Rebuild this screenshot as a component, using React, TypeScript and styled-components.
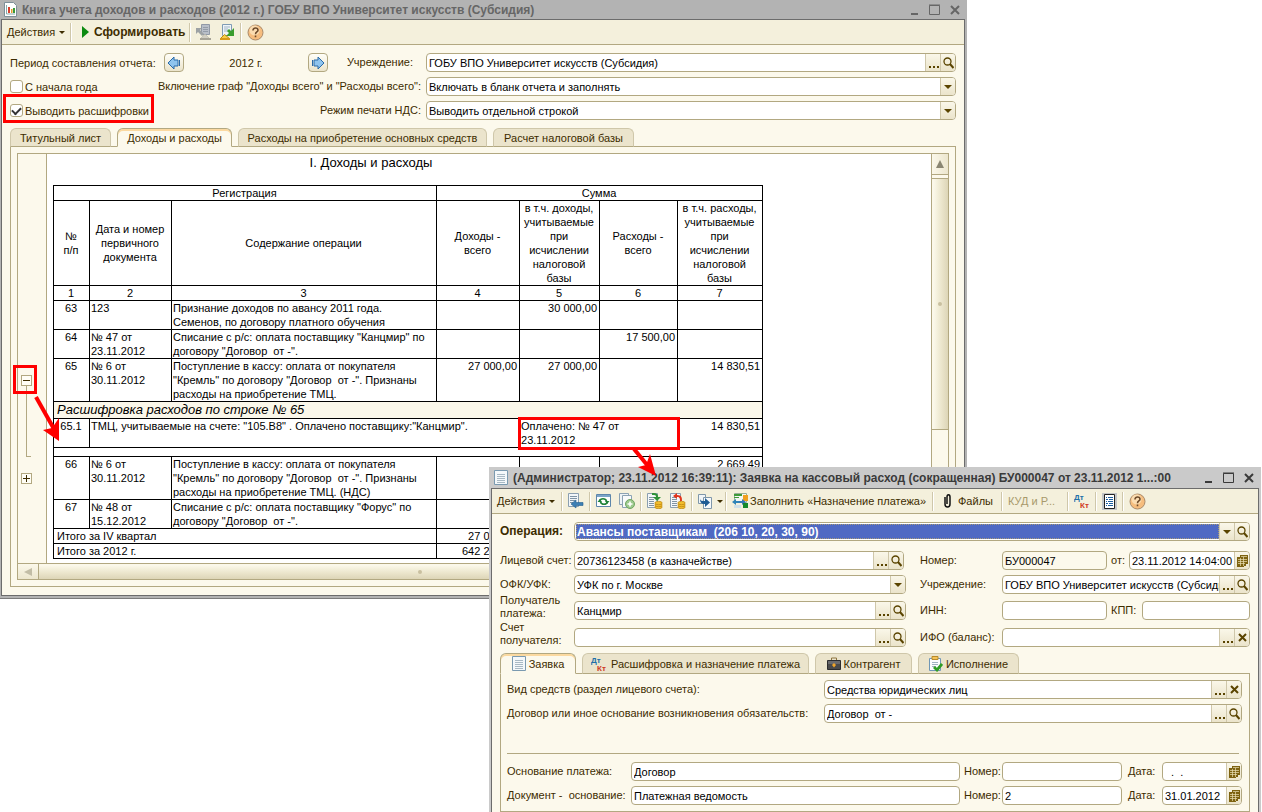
import React from 'react';
import styled, { createGlobalStyle, css } from 'styled-components';

const c = {
  cream: '#fcf9ec',
  bar: '#f4f0dc',
  line: '#b2a881',
  soft: '#cfc7aa',
  tab: '#ebe4cc',
  text: '#3d2c00',
  mark: '#5a4400',
  red: '#ff0000',
};

const Global = createGlobalStyle`
  * { box-sizing: border-box; }
  html, body { margin: 0; background: #fff; }
  body, input, select, button, table {
    font-family: "Liberation Sans", Arial, sans-serif;
    font-size: 11px;
    line-height: 14px;
  }
  svg { flex: none; }
`;

const Desktop = styled.main`
  position: relative;
  min-height: 100vh;
  overflow: hidden;
  background: #fff;
  color: ${c.text};
`;

/* ---------- window frame ---------- */

const ReportWindow = styled.section`
  width: calc(100% - 295px);
  padding: 0 2px 2px 1px;
  border-bottom: 1px solid #7c7c7c;
  background: #b3b3b3;
`;

const RequestWindow = styled.section`
  position: absolute;
  top: 467px;
  left: 489px;
  right: 1px;
  bottom: 0;
  display: flex;
  flex-direction: column;
  padding: 0 2px;
  background: #cacaca;
`;

const TitleBar = styled.header<{ $active?: boolean }>`
  display: flex;
  align-items: center;
  gap: 5px;
  height: ${(p) => (p.$active ? 21 : 19)}px;
  padding: 0 4px 0 3px;
  color: ${(p) => (p.$active ? '#3a3a3a' : '#666')};
`;

const Title = styled.h1`
  flex: 1;
  min-width: 0;
  margin: 0;
  overflow: hidden;
  white-space: nowrap;
  font-size: 12px;
  line-height: 16px;
  font-weight: bold;
`;

const WindowButtons = styled.div`
  display: flex;
  gap: 7px;
`;

const WindowButton = styled.button`
  display: flex;
  width: 13px;
  height: 13px;
  padding: 0;
  border: 0;
  background: none;
  color: inherit;
`;

const Client = styled.div`
  flex: 1;
  border: 1px solid #6c6c6c;
  background: ${c.cream};
`;

const Toolbar = styled.div`
  display: flex;
  align-items: center;
  height: 25px;
  padding: 0 5px;
  border-bottom: 1px solid ${c.line};
  background: ${c.bar};
`;

const Separator = styled.i<{ $before?: number; $after?: number }>`
  flex: none;
  width: 2px;
  height: 19px;
  margin: 0 ${(p) => p.$after ?? 5}px 0 ${(p) => p.$before ?? 5}px;
  border-left: 1px solid ${c.soft};
  border-right: 1px solid #fff;
`;

const ToolButton = styled.button<{ $strong?: boolean; $width?: number; $gap?: number }>`
  display: flex;
  flex: none;
  align-items: center;
  gap: ${(p) => p.$gap ?? 4}px;
  width: ${(p) => (p.$width ? `${p.$width}px` : 'auto')};
  padding: 0;
  border: 0;
  background: none;
  color: ${c.text};
  font-weight: ${(p) => (p.$strong ? 'bold' : 'normal')};
  font-size: ${(p) => (p.$strong ? 12 : 11)}px;
  white-space: nowrap;
  &:disabled { color: #a8996b; }
`;

const CaretMark = styled.i`
  width: 0;
  height: 0;
  border: 3px solid transparent;
  border-top-color: ${c.text};
  border-bottom-width: 0;
`;

/* ---------- fields ---------- */

const FieldBox = styled.div<{ $dim?: boolean; $picked?: boolean; $width?: number }>`
  display: flex;
  flex: ${(p) => (p.$width ? 'none' : '1')};
  width: ${(p) => (p.$width ? `${p.$width}px` : 'auto')};
  min-width: 0;
  height: 19px;
  border: 1px solid ${c.line};
  border-radius: 4px;
  background: ${(p) => (p.$dim ? c.cream : '#fff')};
  overflow: hidden;
  ${(p) =>
    p.$picked &&
    css`
      select {
        margin: 1px 0 1px 1px;
        padding-left: 1px;
        background: #4f69c3;
        outline: 1px dotted #a89a78;
        outline-offset: -1px;
        color: #fff;
        font-weight: bold;
        font-size: 12px;
      }
    `}
`;

const control = css`
  flex: 1;
  width: 0;
  min-width: 0;
  height: auto;
  padding: 0 0 0 2px;
  border: 0;
  border-radius: 0;
  outline: 0;
  background: transparent;
  color: #000;
  appearance: none;
`;
const TextInput = styled.input`${control}`;
const Select = styled.select`${control}`;

const FieldButton = styled.button`
  display: flex;
  flex: none;
  align-items: center;
  justify-content: center;
  width: 15px;
  padding: 0;
  border: 0;
  border-left: 1px solid ${c.soft};
  background: linear-gradient(#faf7e9, #ebe4cb);
  color: ${c.mark};
`;

const DropMark = styled(FieldButton).attrs({ as: 'span' })`
  pointer-events: none;
`;

const SquareButton = styled.button`
  display: flex;
  align-items: center;
  justify-content: center;
  flex: none;
  width: 20px;
  height: 19px;
  padding: 0;
  border: 1px solid ${c.line};
  border-radius: 4px;
  background: linear-gradient(#fffef8, #ebe4cb);
`;

type Mark = 'dots' | 'lens' | 'drop' | 'clear' | 'calendar';

const marks: Record<Mark, React.ReactNode> = {
  dots: (
    <svg width="11" height="11" fill={c.mark}><path d="M1 9h2v2H1zM5 9h2v2H5zM9 9h2v2H9z" /></svg>
  ),
  lens: (
    <svg width="11" height="12" fill="none" stroke={c.mark}>
      <circle cx="4.5" cy="4.5" r="3.5" strokeWidth="1.3" />
      <path d="M7 7l3.5 4" strokeWidth="2" />
    </svg>
  ),
  drop: <svg width="8" height="4" fill={c.mark}><path d="M0 0h8L4 4z" /></svg>,
  clear: (
    <svg width="9" height="9" stroke={c.mark} strokeWidth="2"><path d="M1 1l7 7M8 1L1 8" /></svg>
  ),
  calendar: (
    <svg width="11" height="12">
      <path d="M3 0h8v9H9v2H7v1H0V2h3z" fill="#7d6210" />
      <path d="M1 4.500h9M1 6.500h9M1 8.500h7M3.500 3v8M6.500 2v9M4 1.500h6" stroke="#e9dfb4" strokeWidth=".7" />
    </svg>
  ),
};

const markNames: Record<Mark, string> = {
  dots: 'Выбрать',
  lens: 'Открыть',
  drop: 'Список',
  clear: 'Очистить',
  calendar: 'Календарь',
};

interface FieldProps {
  id: string;
  value?: string;
  marks?: Mark[];
  list?: boolean;
  dim?: boolean;
  picked?: boolean;
  width?: number;
}

function Field({ id, value = '', marks: buttons = [], list, dim, picked, width }: FieldProps) {
  return (
    <FieldBox $dim={dim} $picked={picked} $width={width}>
      {list ? (
        <Select id={id}><option>{value}</option></Select>
      ) : (
        <TextInput id={id} defaultValue={value} readOnly={dim} />
      )}
      {buttons.map((m) =>
        m === 'drop' ? (
          <DropMark key={m}>{marks.drop}</DropMark>
        ) : (
          <FieldButton key={m} type="button" aria-label={markNames[m]}>{marks[m]}</FieldButton>
        ),
      )}
    </FieldBox>
  );
}

const Label = styled.label<{ $width?: number }>`
  flex: none;
  width: ${(p) => (p.$width ? `${p.$width}px` : 'auto')};
  line-height: 13px;
  white-space: pre;
`;

const StrongLabel = styled(Label)`
  font-size: 12px;
  font-weight: bold;
`;

/* ---------- report form ---------- */

const ReportForm = styled.form`
  display: flex;
  flex-direction: column;
  gap: 5px;
  padding: 8px 8px;
`;

const ReportRow = styled.div`
  display: grid;
  grid-template-columns: 411px 1fr;
  column-gap: 5px;
  align-items: center;
`;

const Lead = styled.div`
  display: flex;
  align-items: center;
  justify-content: space-between;
`;

const PeriodLead = styled(Lead)`
  padding-right: 8px;
`;

const PeriodName = styled.span`
  width: 154px;
`;

const Period = styled.div`
  display: flex;
  align-items: center;
  justify-content: space-between;
  width: 164px;
  margin-right: auto;
`;

const Tick = styled.label<{ $called?: boolean }>`
  position: relative;
  display: flex;
  align-items: center;
  gap: 2px;
  white-space: nowrap;
  ${(p) =>
    p.$called &&
    css`
      &::after {
        content: '';
        position: absolute;
        inset: -10px -5px -5px -7px;
        border: 3px solid ${c.red};
        pointer-events: none;
      }
    `}
`;

const TickBox = styled.input`
  display: grid;
  place-items: center;
  width: 13px;
  height: 13px;
  margin: 0;
  border: 1px solid ${c.line};
  border-radius: 3px;
  background: #fff;
  appearance: none;
  &:checked::after {
    content: '';
    width: 7px;
    height: 4px;
    margin-bottom: 2px;
    border: solid #333;
    border-width: 0 0 2px 2px;
    transform: rotate(-45deg);
  }
`;

/* ---------- tabs ---------- */

const Tabs = styled.div`
  position: relative;
  display: flex;
  gap: 6px;
  margin: 0 8px -1px;
`;

const Tab = styled.button<{ $on?: boolean; $tall?: boolean; $width: number }>`
  display: flex;
  align-items: center;
  justify-content: center;
  gap: 3px;
  width: ${(p) => p.$width}px;
  height: ${(p) => (p.$tall ? 21 : 19)}px;
  padding: 0;
  border: 1px solid ${(p) => (p.$on ? c.line : c.soft)};
  border-bottom-color: ${(p) => (p.$on ? c.cream : c.line)};
  border-radius: 6px 6px 0 0;
  background: ${(p) => (p.$on ? c.cream : c.tab)};
  box-shadow: ${(p) => (p.$on ? 'inset 0 2px #fbd9a0' : 'none')};
  color: ${c.text};
  white-space: nowrap;
`;

/* ---------- spreadsheet ---------- */

const TabPanel = styled.div`
  margin: 0 8px 8px;
  padding: 6px;
  border: 1px solid ${c.line};
`;

const SheetFrame = styled.div`
  display: grid;
  grid-template-columns: 29px 1fr 17px;
  grid-template-rows: 409px 16px;
  border: 1px solid ${c.line};
`;

const Gutter = styled.div`
  display: flex;
  flex-direction: column;
  align-items: flex-start;
  padding: 221px 0 0 3px;
  border-right: 1px solid ${c.line};
`;

const TreeButton = styled.button<{ $called?: boolean }>`
  position: relative;
  display: flex;
  flex: none;
  width: 11px;
  height: 11px;
  padding: 0;
  border: 1px solid ${c.line};
  background: #fffef6;
  ${(p) =>
    p.$called &&
    css`
      &::after {
        content: '';
        position: absolute;
        inset: -11px -6px -9px -9px;
        border: 3px solid ${c.red};
      }
    `}
`;

const Stem = styled.i`
  flex: none;
  width: 5px;
  height: 71px;
  margin: 0 0 16px 5px;
  border: solid ${c.line};
  border-width: 0 0 1px 1px;
`;

const Sheet = styled.div`
  min-width: 0;
  overflow: hidden;
  padding: 0 0 0 6px;
  background: #fff;
  color: #000;
`;

const SheetTitle = styled.h2`
  width: 636px;
  margin: 0 0 14px;
  padding-top: 1px;
  font-size: 13px;
  line-height: 16px;
  font-weight: normal;
  text-align: center;
`;

const Grid = styled.table`
  width: 710px;
  border-collapse: collapse;
  table-layout: fixed;
  th, td {
    height: 15px;
    padding: 0 2px 0 1px;
    border: 1px solid #000;
    font-weight: normal;
    text-align: left;
    vertical-align: top;
    white-space: pre-wrap;
  }
  thead th { text-align: center; vertical-align: middle; padding: 0 1px 0 0; }
`;

const Num = styled.td`
  && { text-align: right; }
`;
const Mid = styled.td`
  && { text-align: center; }
`;
const Wide = styled.td`
  && { padding-left: 3px; }
`;
const Group = styled.td`
  && {
    height: 17px;
    padding-left: 3px;
    background: #faf7ea;
    font-size: 13px;
    line-height: 16px;
    font-style: italic;
  }
`;
const Blank = styled.td`
  && { height: 9px; line-height: 8px; }
`;
const Called = styled.td`
  position: relative;
  &::after {
    content: '';
    position: absolute;
    inset: -2px -3px -3px -2px;
    border: 3px solid ${c.red};
  }
`;
const NoRight = styled.td`
  && { border-right: 0; }
`;

const ScrollV = styled.div`
  display: flex;
  flex-direction: column;
  gap: 3px;
  border-left: 1px solid ${c.line};
`;

const ScrollH = styled.div`
  grid-column: 1 / -1;
  display: flex;
  border-top: 1px solid ${c.line};
`;

const ArrowBox = styled.button<{ $side?: boolean }>`
  display: flex;
  flex: none;
  align-items: center;
  justify-content: center;
  width: ${(p) => (p.$side ? 21 : 16)}px;
  height: ${(p) => (p.$side ? 15 : 21)}px;
  padding: 0;
  border: solid ${c.line};
  border-width: ${(p) => (p.$side ? '0 1px 0 0' : '0 0 1px 0')};
  background: linear-gradient(${(p) => (p.$side ? '180deg' : '90deg')}, #fbf8ea, #ece6ce);
`;

const Thumb = styled.div<{ $side?: boolean }>`
  display: flex;
  align-items: center;
  justify-content: center;
  width: ${(p) => (p.$side ? '763px' : '16px')};
  height: ${(p) => (p.$side ? '15px' : '252px')};
  border: solid ${c.line};
  border-width: ${(p) => (p.$side ? '0 1px 0 0' : '1px 0')};
  background: linear-gradient(
    ${(p) => (p.$side ? '180deg' : '90deg')},
    #fbf8ea 0 10%, #f3efda 35%, #ebe5cc 60%, #e2dbbf 85%, #ddd5b6
  );
  &::after {
    content: '';
    width: 4px;
    height: 4px;
    border-radius: 2px;
    background: #c9c0a0;
  }
`;

/* ---------- request form ---------- */

const RequestForm = styled.form`
  display: flex;
  flex-direction: column;
  padding: 8px 8px 6px;
`;

const Line = styled.div<{ $gap?: number; $tall?: boolean }>`
  display: flex;
  align-items: ${(p) => (p.$tall ? 'flex-end' : 'center')};
  height: ${(p) => (p.$tall ? 26 : 19)}px;
  margin-top: ${(p) => p.$gap ?? 0}px;
`;

const Half = styled.div<{ $short?: boolean; $tall?: boolean }>`
  display: flex;
  flex: 1;
  align-items: ${(p) => (p.$tall ? 'flex-end' : 'center')};
  min-width: 0;
  padding-right: ${(p) => (p.$short ? 2 : 0)}px;
`;

const Side = styled.div`
  display: flex;
  flex: none;
  align-items: center;
  gap: 4px;
  width: 330px;
  margin-left: 14px;
`;

const RequestPanel = styled.div`
  flex: 1;
  margin: 0 8px;
  padding: 6px 7px 0 6px;
  border: 1px solid ${c.line};
`;

const RequestClient = styled(Client)`
  display: flex;
  flex-direction: column;
  min-height: 0;
  border-bottom: 0;
`;

const PanelRow = styled.div`
  display: flex;
  align-items: center;
  height: 19px;
  margin-bottom: 5px;
`;

const Rule = styled.hr`
  height: 1px;
  margin: 30px 3px 8px 0;
  border: 0;
  background: ${c.line};
`;

const NumberLabel = styled(Label)`
  width: 38px;
  margin-left: 4px;
`;

const DateGroup = styled.div`
  display: flex;
  align-items: center;
  justify-content: space-between;
  width: 114px;
  margin-left: 6px;
`;

/* ---------- callout arrows ---------- */

const Arrow = styled.svg<{ $x: number; $y: number }>`
  position: absolute;
  left: ${(p) => p.$x}px;
  top: ${(p) => p.$y}px;
  pointer-events: none;
`;

/* ---------- icons ---------- */

const HelpIcon = () => (
  <svg width="17" height="17">
    <circle cx="8.500" cy="8.500" r="7.500" fill="#f6bd7e" stroke="#a98a6a" />
    <circle cx="7.500" cy="6.500" r="5" fill="#fbdcb0" />
    <path d="M6 6.500c0-3.500 5-3 5-.300 0 1.800-2.500 1.800-2.500 4M8.500 11.500v1.800" fill="none" stroke="#6d4a2a" strokeWidth="1.600" />
  </svg>
);

const ReportIcon = () => (
  <svg width="13" height="15">
    <path d="M.5.5h9l3 3v11H.5z" fill="#fff" stroke="#7e8f98" />
    <path d="M2.500 3v9H11" fill="none" stroke="#8aa" />
    <path d="M4 5h2v6H4z" fill="#d8402e" />
    <path d="M7 7h1.500v4H7z" fill="#e89a2e" />
    <path d="M9 6h2v5H9z" fill="#3a9a38" />
  </svg>
);

const PageIcon = () => (
  <svg width="14" height="15">
    <path d="M.5.5h13v14H.5z" fill="#f4f8fa" stroke="#7a9ab0" />
    <path d="M3 4.500h8M3 6.500h8M3 8.500h8M3 10.500h8M3 12.500h8" stroke="#a8b9c4" />
  </svg>
);

const PlayIcon = () => (
  <svg width="7" height="12"><path d="M0 0l7 6-7 6z" fill="#0c8a10" /></svg>
);

const SaveOffIcon = () => (
  <svg width="17" height="17">
    <path d="M5.500.5h8v10h-8z" fill="#b9bfc9" stroke="#9199a6" />
    <path d="M7 3.500h5M7 5.500h5M7 7.500h5" stroke="#949ca8" />
    <path d="M0 4h6L4 6l4 4-2 2-4-4-2 2z" fill="#9da2a4" />
    <path d="M4 15l5-5 5 5z" fill="#d2cfc4" stroke="#b5b2a6" strokeWidth=".6" />
    <path d="M4 14h11v2H4z" fill="#a7a497" />
  </svg>
);

const SaveOnIcon = () => (
  <svg width="17" height="17">
    <path d="M3.500.5h9v11h-9z" fill="#eff4f8" stroke="#7f9bb4" />
    <path d="M5 3h6M5 5h4M5 7h4" stroke="#9fb3c6" />
    <path d="M15 4v8H7l3-3-2-2 2-2 2 2z" fill="#3a9d2e" />
    <path d="M1 15l4.500-4.500L11 15z" fill="#f6cf4a" stroke="#c08a10" />
    <path d="M1 14h10v2H1z" fill="#d79a1a" />
  </svg>
);

const ArrowIcon = ({ back }: { back?: boolean }) => (
  <svg width="14" height="14">
    <path
      d={back ? 'M1 7l6-6v3h4v6H7v3z' : 'M13 7L7 1v3H3v6h4v3z'}
      fill="#8fc4ee"
      stroke="#2a6aa8"
      strokeLinejoin="round"
    />
    <path d={back ? 'M12.500 4v6' : 'M1.500 4v6'} stroke="#2a6aa8" />
  </svg>
);

const PostIcon = () => (
  <svg width="17" height="16">
    <path d="M1.500.5h10v13h-10z" fill="#f2f6f9" stroke="#8b9fb0" />
    <path d="M3 3.500h7M3 5.500h7M3 7.500h5M3 9.500h3" stroke="#7f94a6" />
    <path d="M4 11l5-4v2.500h7v3H9V15z" fill="#3d7fb4" stroke="#23608f" strokeWidth=".6" />
  </svg>
);

const RefreshIcon = () => (
  <svg width="15" height="14">
    <path d="M.5.5h14v12H.5z" fill="#fdfefe" stroke="#5d86ab" />
    <path d="M1 1h13v2H1z" fill="#7ba4c8" />
    <path d="M3.500 7c1-3 6-3 7 0M11.500 8c-1 3-6 3-7 0" fill="none" stroke="#1e8238" strokeWidth="1.700" />
    <path d="M9 7h4.500L11 10zM1.500 8H6L4 5z" fill="#1e8238" />
  </svg>
);

const CopyIcon = () => (
  <svg width="16" height="16">
    <path d="M.5.5h9v11h-9z" fill="#eef3f6" stroke="#8ba2b4" />
    <path d="M3.500 2.500h9v12h-9z" fill="#f8fafb" stroke="#8ba2b4" />
    <circle cx="11" cy="11" r="4.500" fill="#9cc98c" stroke="#6fa562" />
    <path d="M11 8.500v5M8.500 11h5" stroke="#fff" strokeWidth="1.600" />
  </svg>
);

const Coins = () => (
  <g fill="#f2bd2c" stroke="#b98310" strokeWidth=".7">
    <ellipse cx="11.500" cy="14" rx="3.700" ry="1.700" />
    <ellipse cx="11.500" cy="12" rx="3.700" ry="1.700" />
    <ellipse cx="11.500" cy="10" rx="3.700" ry="1.700" />
  </g>
);

const LedgerIcon = ({ undo }: { undo?: boolean }) => (
  <svg width="16" height="16">
    <path d="M.5.5h10v14H.5z" fill="#f4f7f9" stroke="#8b9fb0" />
    <path d="M2 4.500h5M2 6.500h5M2 8.500h5M2 10.500h5M2 12.500h5" stroke="#8194a4" />
    {undo ? (
      <path d="M3 3l4-3v2c5 0 5 3 5 6h-2c0-2 0-4-3-4v2z" fill="#e2341c" />
    ) : (
      <path d="M5 0c6 0 6 2 6 4h3l-4 4-4-4h3c0-2-1-2-4-2z" fill="#2f9338" />
    )}
    <Coins />
  </svg>
);

const BasedOnIcon = () => (
  <svg width="15" height="15">
    <path d="M.5.5h7v9h-7z" fill="#f1f5f8" stroke="#7f97aa" />
    <path d="M5.500 3.500h8v11h-8z" fill="#f6f9fb" stroke="#7f97aa" />
    <path d="M2 4c0 3 2 3 5 3V4l5 4.500L7 13v-3C3 10 2 8 2 4z" fill="#1f5c94" />
  </svg>
);

const FillIcon = () => (
  <svg width="17" height="16">
    <path d="M2.500.5h12v9h-12z" fill="#f3f7f2" stroke="#9ab09a" />
    <path d="M2 1h8v2H2zM2 4h5v1H2z" fill="#3f9a3a" />
    <path d="M11 2h5v6h-5z" fill="#f0a020" />
    <path d="M0 9l4-3v2h3v2H4v2z" fill="#2f84b8" />
    <path d="M14 9l-4-3v2H7v2h3v2z" fill="#3878b8" />
    <path d="M11 10h5v5h-5z" fill="#178a2c" />
    <path d="M2 12h7v3H2z" fill="#cfe0e8" />
  </svg>
);

const ClipIcon = () => (
  <svg width="7" height="14" fill="none" stroke="#111" strokeWidth="1.500">
    <path d="M1 3v7c0 4 5 4 5 0V3c0-3-3-3-3 0v7" />
  </svg>
);

const DtKtIcon = () => (
  <svg width="17" height="16" fontFamily="Liberation Sans, sans-serif" fontWeight="bold" fontSize="8">
    <text x="0" y="7" fill="#1f6fa8">Дт</text>
    <text x="6" y="15" fill="#cf3a20">Кт</text>
  </svg>
);

const JournalIcon = () => (
  <svg width="15" height="17">
    <path d="M0 0h15v17H0z" fill="#c3c6c8" />
    <path d="M2.500 1.500h10v14h-10z" fill="#fff" stroke="#222" />
    <path d="M4 4.500h1M6 4.500h5M4 6.500h2M7 6.500h4M4 8.500h1M6 8.500h5M4 10.500h2M7 10.500h4M4 12.500h1M6 12.500h5" stroke="#1d5fa0" />
  </svg>
);

const CaseIcon = () => (
  <svg width="14" height="13">
    <path d="M4.500 3V1h5v2" fill="none" stroke="#8d7440" />
    <path d="M.5 3.500h13v9H.5z" fill="#4a4a4c" stroke="#2c2c2e" />
    <path d="M1 4h12v3H1z" fill="#6a6a6e" />
    <path d="M7 6l2 2-2 2.500L5 8z" fill="#f1a52a" />
  </svg>
);

const DoneIcon = () => (
  <svg width="14" height="16">
    <path d="M.5 2.500h11v12H.5z" fill="#fbfcfd" stroke="#6f97b6" />
    <path d="M3 .5h6v3H3z" fill="#f4c35a" stroke="#b98a28" />
    <path d="M3 6.500h6M3 8.500h6M3 10.500h4" stroke="#9fb2c0" />
    <path d="M5 11l3 3 5-6" fill="none" stroke="#2f9d24" strokeWidth="2.800" />
  </svg>
);

const Controls = () => (
  <WindowButtons>
    <WindowButton type="button" aria-label="Свернуть">
      <svg width="13" height="13"><path d="M3 10h7v2H3z" fill="currentColor" /></svg>
    </WindowButton>
    <WindowButton type="button" aria-label="Развернуть">
      <svg width="13" height="13"><path d="M1.500 2.500h10v9h-10zM1 2h11" fill="none" stroke="currentColor" /></svg>
    </WindowButton>
    <WindowButton type="button" aria-label="Закрыть">
      <svg width="13" height="13"><path d="M3 3l8 8M11 3l-8 8" stroke="currentColor" strokeWidth="2" /></svg>
    </WindowButton>
  </WindowButtons>
);

/* ---------- data ---------- */

const columnWidths = [36, 82, 265, 83, 80, 78, 85];

interface Entry {
  no: string;
  doc: string;
  text: string;
  sums: [string, string, string, string];
}

const before: Entry[] = [
  { no: '63', doc: '123', text: 'Признание доходов по авансу 2011 года.\nСеменов, по договору платного обучения', sums: ['', '30 000,00', '', ''] },
  { no: '64', doc: '№ 47 от\n23.11.2012', text: 'Списание с р/с: оплата поставщику "Канцмир" по\nдоговору "Договор  от -".', sums: ['', '', '17 500,00', ''] },
  { no: '65', doc: '№ 6 от\n30.11.2012', text: 'Поступление в кассу: оплата от покупателя\n"Кремль" по договору "Договор  от -". Признаны\nрасходы на приобретение ТМЦ.', sums: ['27 000,00', '27 000,00', '', '14 830,51'] },
];

const after: Entry[] = [
  { no: '66', doc: '№ 6 от\n30.11.2012', text: 'Поступление в кассу: оплата от покупателя\n"Кремль" по договору "Договор  от -". Признаны\nрасходы на приобретение ТМЦ. (НДС)', sums: ['', '', '', '2 669,49'] },
  { no: '67', doc: '№ 48 от\n15.12.2012', text: 'Списание с р/с: оплата поставщику "Форус" по\nдоговору "Договор  от -".', sums: ['', '', '', ''] },
];

const EntryRow = ({ entry }: { entry: Entry }) => (
  <tr>
    <Mid>{entry.no}</Mid>
    <td>{entry.doc}</td>
    <td>{entry.text}</td>
    {entry.sums.map((s, i) => <Num key={i}>{s}</Num>)}
  </tr>
);

const Ledger = () => (
  <Grid>
    <colgroup>{columnWidths.map((w, i) => <col key={i} width={w} />)}</colgroup>
    <thead>
      <tr><th colSpan={3}>Регистрация</th><th colSpan={4}>Сумма</th></tr>
      <tr>
        <th>{'№\nп/п'}</th>
        <th>{'Дата и номер\nпервичного\nдокумента'}</th>
        <th>Содержание операции</th>
        <th>{'Доходы -\nвсего'}</th>
        <th>{'в т.ч. доходы,\nучитываемые\nпри\nисчислении\nналоговой\nбазы'}</th>
        <th>{'Расходы -\nвсего'}</th>
        <th>{'в т.ч. расходы,\nучитываемые\nпри\nисчислении\nналоговой\nбазы'}</th>
      </tr>
      <tr>{[1, 2, 3, 4, 5, 6, 7].map((n) => <th key={n}>{n}</th>)}</tr>
    </thead>
    <tbody>
      {before.map((e) => <EntryRow key={e.no} entry={e} />)}
      <tr><Group colSpan={7}>Расшифровка расходов по строке № 65</Group></tr>
      <tr>
        <Mid>65.1</Mid>
        <NoRight colSpan={3}>ТМЦ, учитываемые на счете: "105.В8" . Оплачено поставщику:"Канцмир".</NoRight>
        <Called colSpan={2}>{'Оплачено: № 47 от\n23.11.2012'}</Called>
        <Num>14 830,51</Num>
      </tr>
      <tr><Blank colSpan={7} /></tr>
      {after.map((e) => <EntryRow key={e.no} entry={e} />)}
      <tr><Wide colSpan={3}>Итого за IV квартал</Wide><Num>27 000,00</Num><td /><td /><td /></tr>
      <tr><Wide colSpan={3}>Итого за 2012 г.</Wide><Num>642 200,00</Num><td /><td /><td /></tr>
    </tbody>
  </Grid>
);

/* ---------- windows ---------- */

const Report = () => (
  <ReportWindow>
    <TitleBar>
      <ReportIcon />
      <Title>Книга учета доходов и расходов (2012 г.) ГОБУ ВПО Университет искусств (Субсидия)</Title>
      <Controls />
    </TitleBar>
    <Client>
      <Toolbar>
        <ToolButton type="button" $width={61}>Действия <CaretMark /></ToolButton>
        <Separator $before={2} $after={10} />
        <ToolButton type="button" $strong $width={102} $gap={5}><PlayIcon /> Сформировать</ToolButton>
        <Separator />
        <ToolButton type="button" aria-label="Сохранить значения" disabled $width={23}><SaveOffIcon /></ToolButton>
        <ToolButton type="button" aria-label="Восстановить значения"><SaveOnIcon /></ToolButton>
        <Separator $before={4} />
        <ToolButton type="button" aria-label="Справка"><HelpIcon /></ToolButton>
      </Toolbar>

      <ReportForm>
        <ReportRow>
          <PeriodLead>
            <PeriodName>Период составления отчета:</PeriodName>
            <Period>
              <SquareButton type="button" aria-label="Предыдущий период"><ArrowIcon back /></SquareButton>
              <span>2012 г.</span>
              <SquareButton type="button" aria-label="Следующий период"><ArrowIcon /></SquareButton>
            </Period>
            <Label htmlFor="org">Учреждение:</Label>
          </PeriodLead>
          <Field id="org" value="ГОБУ ВПО Университет искусств (Субсидия)" marks={['dots', 'lens']} />
        </ReportRow>
        <ReportRow>
          <Lead>
            <Tick><TickBox type="checkbox" />С начала года</Tick>
            <Label htmlFor="columns">Включение граф "Доходы всего" и "Расходы всего":</Label>
          </Lead>
          <Field id="columns" list value="Включать в бланк отчета и заполнять" marks={['drop']} />
        </ReportRow>
        <ReportRow>
          <Lead>
            <Tick $called><TickBox type="checkbox" defaultChecked />Выводить расшифровки</Tick>
            <Label htmlFor="vat">Режим печати НДС:</Label>
          </Lead>
          <Field id="vat" list value="Выводить отдельной строкой" marks={['drop']} />
        </ReportRow>
      </ReportForm>

      <Tabs role="tablist">
        <Tab role="tab" $width={101}>Титульный лист</Tab>
        <Tab role="tab" $width={115} $on>Доходы и расходы</Tab>
        <Tab role="tab" $width={249}>Расходы на приобретение основных средств</Tab>
        <Tab role="tab" $width={141}>Расчет налоговой базы</Tab>
      </Tabs>
      <TabPanel>
        <SheetFrame>
          <Gutter>
            <TreeButton type="button" aria-label="Свернуть строку 65" $called>
              <svg width="9" height="9"><path d="M1 4.500h7" stroke={c.text} /></svg>
            </TreeButton>
            <Stem />
            <TreeButton type="button" aria-label="Развернуть строку 66">
              <svg width="9" height="9"><path d="M1 4.500h7M4.500 1v7" stroke={c.text} /></svg>
            </TreeButton>
          </Gutter>
          <Sheet>
            <SheetTitle>I. Доходы и расходы</SheetTitle>
            <Ledger />
          </Sheet>
          <ScrollV>
            <ArrowBox type="button" aria-label="Вверх"><svg width="8" height="8"><path d="M4 0l4 8H0z" fill="#8a8672" /></svg></ArrowBox>
            <Thumb />
          </ScrollV>
          <ScrollH>
            <ArrowBox type="button" aria-label="Влево" $side><svg width="8" height="8"><path d="M0 4l8-4v8z" fill="#c2bda6" /></svg></ArrowBox>
            <Thumb $side />
          </ScrollH>
        </SheetFrame>
      </TabPanel>
    </Client>
  </ReportWindow>
);

const paymentRows = [
  { key: 'basis', name: 'Основание платежа:', value: 'Договор', no: '', date: '  .  .' },
  { key: 'doc', name: 'Документ -  основание:', value: 'Платежная ведомость', no: '2', date: '31.01.2012' },
];

const Request = () => (
  <RequestWindow>
    <TitleBar $active>
      <PageIcon />
      <Title>(Администратор; 23.11.2012 16:39:11): Заявка на кассовый расход (сокращенная) БУ000047 от 23.11.2012 1...:00</Title>
      <Controls />
    </TitleBar>
    <RequestClient>
      <Toolbar>
        <ToolButton type="button" $width={62}>Действия <CaretMark /></ToolButton>
        <Separator $before={2} $after={4} />
        <ToolButton type="button" aria-label="Записать"><PostIcon /></ToolButton>
        <Separator />
        <ToolButton type="button" aria-label="Обновить" $width={23}><RefreshIcon /></ToolButton>
        <ToolButton type="button" aria-label="Скопировать"><CopyIcon /></ToolButton>
        <Separator />
        <ToolButton type="button" aria-label="Провести" $width={23}><LedgerIcon /></ToolButton>
        <ToolButton type="button" aria-label="Отменить проведение"><LedgerIcon undo /></ToolButton>
        <Separator />
        <ToolButton type="button" aria-label="Ввести на основании" $width={25}><BasedOnIcon /><CaretMark /></ToolButton>
        <Separator $before={2} />
        <ToolButton type="button" $width={195} $gap={1}><FillIcon />Заполнить «Назначение платежа»</ToolButton>
        <Separator $after={10} />
        <ToolButton type="button" $width={53} $gap={7}><ClipIcon /> Файлы</ToolButton>
        <Separator $before={4} />
        <ToolButton type="button" disabled $width={54}>КУД и Р...</ToolButton>
        <Separator />
        <ToolButton type="button" aria-label="Проводки"><DtKtIcon /></ToolButton>
        <Separator $before={4} />
        <ToolButton type="button" aria-label="Журнал"><JournalIcon /></ToolButton>
        <Separator />
        <ToolButton type="button" aria-label="Справка"><HelpIcon /></ToolButton>
      </Toolbar>

      <RequestForm>
        <Line>
          <StrongLabel htmlFor="operation" $width={74}>Операция:</StrongLabel>
          <Field id="operation" list picked value={'Авансы поставщикам\u00a0 (206 10, 20, 30, 90)'} marks={['drop', 'lens']} />
        </Line>
        <Line $gap={10}>
          <Half $short>
            <Label htmlFor="account" $width={74}>Лицевой счет:</Label>
            <Field id="account" value="20736123458 (в казначействе)" marks={['dots', 'lens']} />
          </Half>
          <Side>
            <Label htmlFor="number" $width={78}>Номер:</Label>
            <Field id="number" dim value="БУ000047" width={105} />
            <Label htmlFor="moment">от:</Label>
            <Field id="moment" value="23.11.2012 14:04:00" marks={['calendar']} />
          </Side>
        </Line>
        <Line $gap={5}>
          <Half>
            <Label htmlFor="ofk" $width={74}>ОФК/УФК:</Label>
            <Field id="ofk" list value="УФК по г. Москве" marks={['drop']} />
          </Half>
          <Side>
            <Label htmlFor="company" $width={78}>Учреждение:</Label>
            <Field id="company" value="ГОБУ ВПО Университет искусств (Субсидия)" marks={['dots', 'lens']} />
          </Side>
        </Line>
        <Line $tall>
          <Half $tall>
            <Label htmlFor="payee" $width={74}>{'Получатель\nплатежа:'}</Label>
            <Field id="payee" value="Канцмир" marks={['dots', 'lens']} />
          </Half>
          <Side>
            <Label htmlFor="inn" $width={78}>ИНН:</Label>
            <Field id="inn" width={105} />
            <Label htmlFor="kpp" $width={27}>КПП:</Label>
            <Field id="kpp" />
          </Side>
        </Line>
        <Line $tall $gap={1}>
          <Half $tall>
            <Label htmlFor="payee-account" $width={74}>{'Счет\nполучателя:'}</Label>
            <Field id="payee-account" marks={['dots', 'lens']} />
          </Half>
          <Side>
            <Label htmlFor="ifo" $width={78}>ИФО (баланс):</Label>
            <Field id="ifo" marks={['dots', 'clear']} />
          </Side>
        </Line>
      </RequestForm>

      <Tabs role="tablist">
        <Tab role="tab" $tall $width={76} $on><PageIcon /> Заявка</Tab>
        <Tab role="tab" $tall $width={227}><DtKtIcon />Расшифровка и назначение платежа</Tab>
        <Tab role="tab" $tall $width={97}><CaseIcon /> Контрагент</Tab>
        <Tab role="tab" $tall $width={101}><DoneIcon /> Исполнение</Tab>
      </Tabs>
      <RequestPanel>
        <PanelRow>
          <Label htmlFor="funds" $width={317}>Вид средств (раздел лицевого счета):</Label>
          <Field id="funds" value="Средства юридических лиц" marks={['dots', 'clear']} />
        </PanelRow>
        <PanelRow>
          <Label htmlFor="contract" $width={317}>Договор или иное основание возникновения обязательств:</Label>
          <Field id="contract" value="Договор  от -" marks={['dots', 'lens']} />
        </PanelRow>
        <Rule />
        {paymentRows.map((r) => (
          <PanelRow key={r.key}>
            <Label htmlFor={r.key} $width={124}>{r.name}</Label>
            <Field id={r.key} value={r.value} />
            <NumberLabel htmlFor={`${r.key}-no`}>Номер:</NumberLabel>
            <Field id={`${r.key}-no`} value={r.no} width={120} />
            <DateGroup>
              <Label htmlFor={`${r.key}-date`}>Дата:</Label>
              <Field id={`${r.key}-date`} value={r.date} marks={['calendar']} width={80} />
            </DateGroup>
          </PanelRow>
        ))}
      </RequestPanel>
    </RequestClient>
  </RequestWindow>
);

export default function App() {
  return (
    <Desktop>
      <Global />
      <Report />
      <Request />
      <Arrow $x={30} $y={392} width="36" height="52">
        <path d="M6 5l18 32" stroke={c.red} strokeWidth="4" />
        <path d="M29 49L13 38l9-2 7-10z" fill={c.red} />
      </Arrow>
      <Arrow $x={628} $y={446} width="32" height="32">
        <path d="M6 3l14 17" stroke={c.red} strokeWidth="4" />
        <path d="M28 30L10 21l8-2 4-11z" fill={c.red} />
      </Arrow>
    </Desktop>
  );
}
